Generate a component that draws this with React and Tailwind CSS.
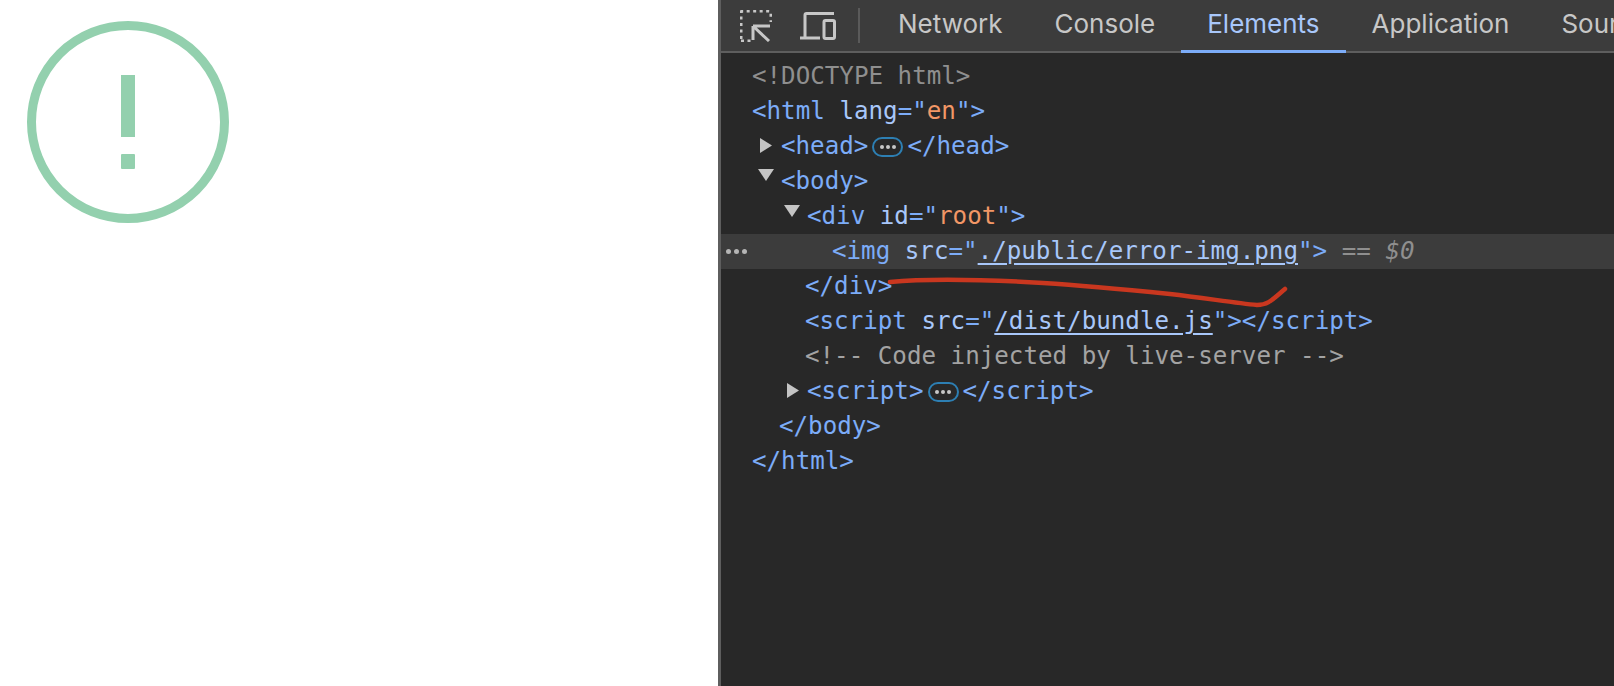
const tag = "text-[#7cacf8]";
const attr = "text-[#a8c7fa]";
const val = "text-[#f29766]";

const Pill = () => (
  <span className="mx-[4px] inline-flex h-[20px] w-[31px] items-center justify-center gap-[2px] rounded-full border-2 border-[#2d7fb3]">
    <span className="h-[4px] w-[4px] rounded-full bg-[#c7c7c7]" />
    <span className="h-[4px] w-[4px] rounded-full bg-[#c7c7c7]" />
    <span className="h-[4px] w-[4px] rounded-full bg-[#c7c7c7]" />
  </span>
);

const Right = ({ className }) => (
  <svg viewBox="0 0 12 15" className={className}>
    <path d="M0 0L12 7.500L0 15Z" fill="#c4c4c4" />
  </svg>
);

const Down = ({ className }) => (
  <svg viewBox="0 0 16 12" className={className}>
    <path d="M0 0H16L8 12Z" fill="#c4c4c4" />
  </svg>
);

const Row = ({ pad, children, active }) => (
  <div className={`relative flex h-[35px] items-center whitespace-pre ${pad} ${active ? "bg-[#3c3c3c]" : ""}`}>
    {children}
  </div>
);

const tabs = [
  { name: "Network", cls: "text-[#c7c7c7] border-transparent" },
  { name: "Console", cls: "text-[#c7c7c7] border-transparent" },
  { name: "Elements", cls: "text-[#a8c7fa] border-[#7cacf8]" },
  { name: "Application", cls: "text-[#c7c7c7] border-transparent" },
  { name: "Sources", cls: "text-[#c7c7c7] border-transparent" },
];

export default function App() {
  return (
    <div className="relative flex h-screen w-full overflow-hidden bg-white font-['Inter',sans-serif]">
      <div className="w-[718px] shrink-0 pl-[27px] pt-[21px]">
        <svg viewBox="0 0 202 202" className="h-[202px] w-[202px]">
          <circle cx="101" cy="101" r="96.500" fill="none" stroke="#93d0ae" strokeWidth="9" />
          <rect x="94" y="54" width="14" height="62" fill="#93d0ae" />
          <rect x="94" y="133" width="14" height="15" rx="1" fill="#93d0ae" />
        </svg>
      </div>
      <div className="w-[3px] shrink-0 bg-[#5e5e5e]" />

      <div className="min-w-0 flex-1 overflow-hidden bg-[#282828]">
        <div className="flex h-[53px] items-stretch border-b-[2px] border-[#5e5e5e] bg-[#3c3c3c]">
          <div className="flex shrink-0 items-center pl-[19px]">
            <svg viewBox="0 0 32 32" className="h-[32px] w-[32px]" fill="none" stroke="#c7c7c7">
              <path d="M1 29V3a2 2 0 0 1 2-2H29a2 2 0 0 1 2 2V12" strokeWidth="3" strokeDasharray="3 3.500" />
              <path d="M1 31H13" strokeWidth="3" strokeDasharray="3 3.500" />
              <path d="M13 16H30M13 16V30M14 17L29 31" strokeWidth="3" />
            </svg>
            <svg viewBox="0 0 36 28" className="ml-[28px] h-[28px] w-[36px]" fill="none" stroke="#c7c7c7" strokeWidth="3">
              <path d="M5 25V3a1.500 1.500 0 0 1 1.500-1.500H34" />
              <path d="M0 26H20" />
              <rect x="24" y="8.500" width="10.500" height="18" rx="1.500" />
            </svg>
            <div className="ml-[22px] h-[35px] w-[2px] bg-[#5a5a5a]" />
          </div>
          <div className="-mb-[2px] ml-[12px] flex items-stretch">
            {tabs.map((t) => (
              <div key={t.name} className={`flex items-center whitespace-nowrap border-b-[3px] px-[26px] pb-[4px] text-[26px] ${t.cls}`}>
                {t.name}
              </div>
            ))}
          </div>
        </div>

        <div className="pt-[6px] font-['DejaVu_Sans_Mono',monospace] text-[24.200px] text-[#7cacf8]">
          <Row pad="pl-[31px]">
            <span className="text-[#8f8f8f]">{"<!DOCTYPE html>"}</span>
          </Row>
          <Row pad="pl-[31px]">
            <span className={tag}>{"<html "}</span>
            <span className={attr}>lang</span>
            <span className={tag}>="</span>
            <span className={val}>en</span>
            <span className={tag}>{'">'}</span>
          </Row>
          <Row pad="pl-[60px]">
            <Right className="absolute left-[39px] top-[9px] h-[15px] w-[12px]" />
            <span>{"<head>"}</span>
            <Pill />
            <span>{"</head>"}</span>
          </Row>
          <Row pad="pl-[60px]">
            <Down className="absolute left-[37px] top-[5px] h-[12px] w-[16px]" />
            <span>{"<body>"}</span>
          </Row>
          <Row pad="pl-[86px]">
            <Down className="absolute left-[63px] top-[6px] h-[12px] w-[16px]" />
            <span>{"<div "}</span>
            <span className={attr}>id</span>
            <span>="</span>
            <span className={val}>root</span>
            <span>{'">'}</span>
          </Row>
          <Row pad="pl-[111px]" active>
            <span className="absolute left-[5px] top-[15px] flex gap-[3px]">
              <span className="h-[5px] w-[5px] rounded-full bg-[#b5b5b5]" />
              <span className="h-[5px] w-[5px] rounded-full bg-[#b5b5b5]" />
              <span className="h-[5px] w-[5px] rounded-full bg-[#b5b5b5]" />
            </span>
            <span>{"<img "}</span>
            <span className={attr}>src</span>
            <span>="</span>
            <span className={`${attr} underline underline-offset-4`}>./public/error-img.png</span>
            <span>{'">'}</span>
            <span className="text-[#8f8f8f]">{" == "}</span>
            <span className="italic text-[#8f8f8f]">$0</span>
          </Row>
          <Row pad="pl-[84px]">
            <span>{"</div>"}</span>
          </Row>
          <Row pad="pl-[84px]">
            <span>{"<script "}</span>
            <span className={attr}>src</span>
            <span>="</span>
            <span className={`${attr} underline underline-offset-4`}>/dist/bundle.js</span>
            <span>{'"></script>'}</span>
          </Row>
          <Row pad="pl-[84px]">
            <span className="text-[#a3a3a3]">{"<!-- Code injected by live-server -->"}</span>
          </Row>
          <Row pad="pl-[86px]">
            <Right className="absolute left-[66px] top-[9px] h-[15px] w-[12px]" />
            <span>{"<script>"}</span>
            <Pill />
            <span>{"</script>"}</span>
          </Row>
          <Row pad="pl-[58px]">
            <span>{"</body>"}</span>
          </Row>
          <Row pad="pl-[31px]">
            <span>{"</html>"}</span>
          </Row>
        </div>
      </div>

      <svg className="pointer-events-none absolute left-0 top-0 h-full w-full" fill="none">
        <path
          d="M890 282C920 279 977 279 1043 283C1090 286 1130 290 1170 294C1205 298 1235 303 1257 305C1268 305 1272 300 1285 289"
          stroke="#c9371f"
          strokeWidth="4.500"
          strokeLinecap="round"
        />
      </svg>
    </div>
  );
}
